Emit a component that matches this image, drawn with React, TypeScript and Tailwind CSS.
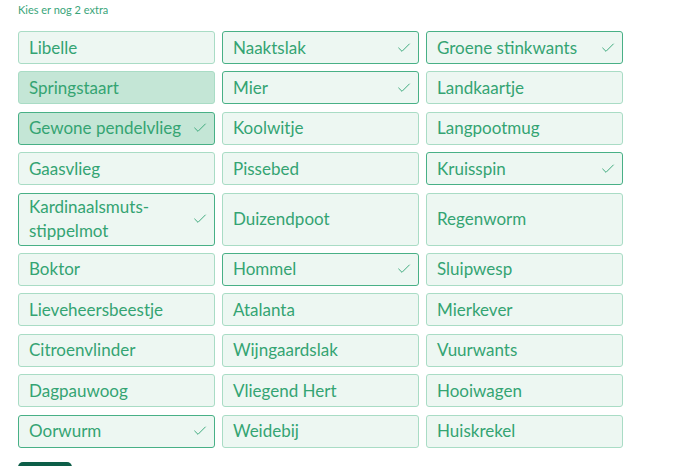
import React from 'react';
import { Check } from 'lucide-react';

interface Option {
  name: string;
  selected?: boolean;
  muted?: boolean;
}

const options: Option[] = [
  { name: 'Libelle' },
  { name: 'Naaktslak', selected: true },
  { name: 'Groene stinkwants', selected: true },
  { name: 'Springstaart', muted: true },
  { name: 'Mier', selected: true },
  { name: 'Landkaartje' },
  { name: 'Gewone pendelvlieg', selected: true, muted: true },
  { name: 'Koolwitje' },
  { name: 'Langpootmug' },
  { name: 'Gaasvlieg' },
  { name: 'Pissebed' },
  { name: 'Kruisspin', selected: true },
  { name: 'Kardinaalsmuts-stippelmot', selected: true },
  { name: 'Duizendpoot' },
  { name: 'Regenworm' },
  { name: 'Boktor' },
  { name: 'Hommel', selected: true },
  { name: 'Sluipwesp' },
  { name: 'Lieveheersbeestje' },
  { name: 'Atalanta' },
  { name: 'Mierkever' },
  { name: 'Citroenvlinder' },
  { name: 'Wijngaardslak' },
  { name: 'Vuurwants' },
  { name: 'Dagpauwoog' },
  { name: 'Vliegend Hert' },
  { name: 'Hooiwagen' },
  { name: 'Oorwurm', selected: true },
  { name: 'Weidebij' },
  { name: 'Huiskrekel' },
];

const App: React.FC = () => {
  return (
    <div className="w-[690px] h-[466px] overflow-hidden bg-white font-['Lato','Liberation_Sans',sans-serif]">
      <div className="px-[18px]">
        <p className="pt-[3px] h-[31px] text-[11px] leading-[14px] text-[#3aa57a]">Kies er nog 2 extra</p>

        <div className="grid grid-cols-[197px_197px_197px] gap-x-[7px] gap-y-[7.4px]">
          {options.map((opt) => (
            <button
              key={opt.name}
              className={
                'flex items-center justify-between gap-2 min-h-[33px] py-[1.5px] pl-[10px] pr-[6px] rounded-[3px] text-left text-[17px] leading-6 text-[#34a472] ' +
                (opt.selected ? 'border-[1.5px] border-[#48b086] ' : 'border border-[#a9dcc5] ') +
                (opt.muted ? 'bg-[#c4e6d6]' : 'bg-[#edf7f2]')
              }
            >
              <span className="whitespace-nowrap">
                {opt.name === 'Kardinaalsmuts-stippelmot' ? (
                  <>Kardinaalsmuts-<br />stippelmot</>
                ) : (
                  opt.name
                )}
              </span>
              {opt.selected && <Check className="w-4 h-4 shrink-0 text-[#3fab7e]" strokeWidth={1.5} />}
            </button>
          ))}
        </div>

        <div className="mt-[14px] w-[54px] h-[10px] rounded-t-[5px] bg-[#0d5e48]" />
      </div>
    </div>
  );
};

export default App;
